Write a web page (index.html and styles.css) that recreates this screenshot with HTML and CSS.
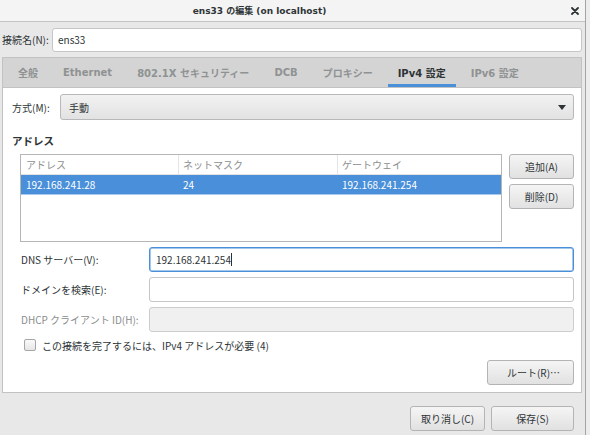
FILE: index.html
```html
<!DOCTYPE html>
<html lang="ja">
<head>
<meta charset="utf-8">
<link rel="stylesheet" href="styles.css">
</head>
<body>
<div class="screen">
  <div class="window">
    <div class="titlebar">
      <span class="title">ens33 の編集 (on localhost)</span>
      <span class="close">
        <svg width="8" height="8" viewBox="0 0 8 8"><path d="M1 1 L7 7 M7 1 L1 7" stroke="#2e3436" stroke-width="1.8" stroke-linecap="round"/></svg>
      </span>
    </div>
    <div class="body">
      <div class="name-row">
        <span class="label">接続名(N):</span>
        <div class="entry name-entry">ens33</div>
      </div>
      <div class="notebook">
        <div class="tabs">
          <span class="tab">全般</span>
          <span class="tab">Ethernet</span>
          <span class="tab">802.1X セキュリティー</span>
          <span class="tab">DCB</span>
          <span class="tab">プロキシー</span>
          <span class="tab active">IPv4 設定</span>
          <span class="tab">IPv6 設定</span>
        </div>
        <div class="page">
          <div class="method-row">
            <span class="label">方式(M):</span>
            <div class="combo">
              <span>手動</span>
              <svg class="arrow" width="8" height="5" viewBox="0 0 8 5"><path d="M0 0 H8 L4 5 Z" fill="#2e3436"/></svg>
            </div>
          </div>
          <div class="section-title">アドレス</div>
          <div class="addr-area">
            <div class="table">
              <div class="thead">
                <span class="c1">アドレス</span>
                <span class="c2">ネットマスク</span>
                <span class="c3">ゲートウェイ</span>
              </div>
              <div class="trow selected">
                <span class="c1">192.168.241.28</span>
                <span class="c2">24</span>
                <span class="c3">192.168.241.254</span>
              </div>
            </div>
            <div class="side-buttons">
              <div class="button small">追加(A)</div>
              <div class="button small">削除(D)</div>
            </div>
          </div>
          <div class="form">
            <span class="label">DNS サーバー(V):</span>
            <div class="entry focused">192.168.241.254<span class="caret"></span></div>
            <span class="label">ドメインを検索(E):</span>
            <div class="entry"></div>
            <span class="label disabled">DHCP クライアント ID(H):</span>
            <div class="entry insensitive"></div>
          </div>
          <div class="check-row">
            <span class="checkbox"></span>
            <span class="check-label">この接続を完了するには、IPv4 アドレスが必要 (4)</span>
          </div>
          <div class="route-row">
            <div class="button route">ルート(R)…</div>
          </div>
        </div>
      </div>
      <div class="actions">
        <div class="button cancel">取り消し(C)</div>
        <div class="button save">保存(S)</div>
      </div>
    </div>
  </div>
</div>
</body>
</html>
```
FILE: styles.css
```css
* { box-sizing: border-box; }
html, body { margin: 0; padding: 0; }
body {
  width: 590px;
  height: 435px;
  overflow: hidden;
  background: #ececec;
  font-family: "Noto Sans CJK JP", "Noto Sans", sans-serif;
  font-size: 10px;
  color: #2e3436;
}
.screen { display: flex; height: 435px; }
.window {
  width: 586px;
  height: 435px;
  background: #e8e8e8;
  border-right: 1px solid #a4a4a4;
  display: flex;
  flex-direction: column;
}
.titlebar {
  height: 22px;
  background: #f4f4f4;
  border-bottom: 1px solid #c4c4c4;
  position: relative;
  display: flex;
  align-items: center;
  justify-content: center;
  padding-right: 66px;
}
.title {
  font-family: "DejaVu Sans", "Noto Sans CJK JP", sans-serif;
  font-weight: bold;
  font-size: 9px;
  color: #2e3436;
}
.close {
  position: absolute;
  right: 6px;
  top: 7px;
  display: flex;
}
.body { flex: 1; display: flex; flex-direction: column; }
.name-row {
  display: flex;
  align-items: center;
  padding: 5px 3px 0 2px;
  height: 30px;
}
.name-row .label { width: 50px; }
.entry {
  background: #fff;
  border: 1px solid #c6c6c6;
  border-radius: 3px;
  height: 25px;
  display: flex;
  align-items: center;
  padding-left: 6px;
}
.name-entry { flex: 1; height: 24px; padding-left: 5px; }
.notebook {
  margin: 5px 3px 0 2px;
  border: 1px solid #c2c2c2;
  height: 336px;
  display: flex;
  flex-direction: column;
}
.tabs {
  height: 30px;
  background: #d4d4d4;
  border-bottom: 1px solid #c2c2c2;
  display: flex;
  align-items: stretch;
  padding-left: 5px;
  gap: 5px;
}
.tab {
  font-family: "DejaVu Sans", "Noto Sans CJK JP", sans-serif;
  font-weight: bold;
  font-size: 10px;
  color: #8f9292;
  padding: 0 10px;
  display: flex;
  align-items: center;
  border-bottom: 3px solid transparent;
  padding-top: 2px;
}
.tab.active {
  color: #2e3436;
  border-bottom-color: #4a90d9;
}
.page {
  flex: 1;
  background: #fff;
  padding: 6px 7px 0 9px;
  display: flex;
  flex-direction: column;
}
.method-row { display: flex; align-items: center; height: 26px; }
.method-row .label { width: 48px; }
.combo {
  flex: 1;
  height: 26px;
  border: 1px solid #b8b8b8;
  border-radius: 3px;
  background: linear-gradient(#f2f2f2, #e2e2e2);
  display: flex;
  align-items: center;
  justify-content: space-between;
  padding: 0 7px 0 8px;
}
.section-title {
  font-family: "DejaVu Sans", "Noto Sans CJK JP", sans-serif;
  font-weight: bold;
  font-size: 10.5px;
  margin-top: 14px;
  height: 14px;
  line-height: 14px;
}
.addr-area {
  display: flex;
  margin-top: 6px;
  padding-left: 8px;
  gap: 7px;
}
.table {
  width: 484px;
  height: 88px;
  border: 1px solid #b6b6b6;
  background: #fff;
}
.thead, .trow { display: flex; height: 20px; align-items: center; }
.thead {
  color: #8b8e8e;
  border-bottom: 1px solid #e2e2e2;
}
.thead span { border-right: 1px solid #e4e4e4; height: 100%; display: flex; align-items: center; }
.thead span.c3 { border-right: none; }
.c1 { width: 158px; padding-left: 5px; }
.c2 { width: 159px; padding-left: 4px; }
.c3 { flex: 1; padding-left: 4px; }
.trow.selected {
  background: #4a8fd9;
  color: #fff;
  border-bottom: 1px solid #a9c9ec;
}
.trow span { display: flex; align-items: center; }
.side-buttons { display: flex; flex-direction: column; gap: 5px; }
.button {
  border: 1px solid #b4b4b4;
  border-radius: 3px;
  background: linear-gradient(#f5f5f5, #e1e1e1);
  display: flex;
  align-items: center;
  justify-content: center;
  color: #2e3436;
  height: 25px;
}
.button.small { width: 65px; }
.form {
  display: grid;
  grid-template-columns: 128px 1fr;
  row-gap: 5px;
  margin-top: 5px;
  padding-left: 9px;
  align-items: center;
}
.entry.focused { border-color: #4a90d9; box-shadow: inset 0 0 0 0.5px #4a90d9; }
.caret { display: inline-block; width: 1px; height: 13px; background: #2e3436; margin-left: 0; }
.entry.insensitive { background: #f0f0f0; border-color: #cdcdcd; }
.label.disabled { color: #8b8e8e; }
.check-row {
  display: flex;
  align-items: center;
  margin-top: 6px;
  padding-left: 12px;
  height: 14px;
}
.checkbox {
  width: 12px;
  height: 12px;
  border: 1px solid #a6a6a6;
  border-radius: 2px;
  background: linear-gradient(#fafafa, #e6e6e6);
  margin-right: 6px;
}
.route-row { display: flex; justify-content: flex-end; margin-top: 8px; }
.button.route { width: 87px; height: 25px; padding-left: 6px; }
.actions {
  display: flex;
  justify-content: flex-end;
  gap: 6px;
  padding: 13px 11px 0 0;
}
.button.cancel { width: 75px; }
.button.save { width: 83px; }
```
